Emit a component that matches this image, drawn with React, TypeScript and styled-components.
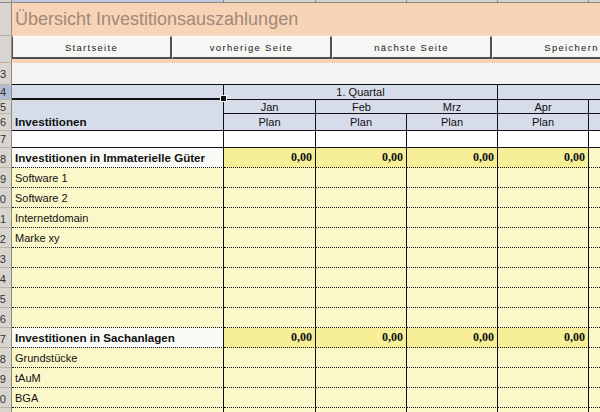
import React from "react";
import styled, { createGlobalStyle } from "styled-components";

const GlobalStyle = createGlobalStyle`
  html, body {
    margin: 0;
    padding: 0;
    background: #ffffff;
    overflow: hidden;
  }
  body {
    font-family: "Liberation Sans", Arial, sans-serif;
  }
`;

// row head, label column, Jan, Feb, Mrz, Apr, rest
const COLS = "12px 212px 92px 91px 91px 91px 1fr";

const PEACH = "#f7d4b6";
const HEAD_BLUE = "#d6dce9";
const PALE = "#faf7c9";
const SUM = "#f6ef98";

type RowDef = { n: number; label?: string; sum?: boolean };

const bodyRows: RowDef[] = [
  { n: 8, label: "Investitionen in Immaterielle Güter", sum: true },
  { n: 9, label: "Software 1" },
  { n: 10, label: "Software 2" },
  { n: 11, label: "Internetdomain" },
  { n: 12, label: "Marke xy" },
  { n: 13 },
  { n: 14 },
  { n: 15 },
  { n: 16 },
  { n: 17, label: "Investitionen in Sachanlagen", sum: true },
  { n: 18, label: "Grundstücke" },
  { n: 19, label: "tAuM" },
  { n: 20, label: "BGA" },
  { n: 21 },
];

const buttons = ["Startseite", "vorherige Seite", "nächste Seite", "Speichern"];

export default function App() {
  return (
    <>
      <GlobalStyle />
      <Sheet>
        <ColumnHeads>
          <ColHead />
          <ColHead $active />
          <ColHead />
          <ColHead />
          <ColHead />
          <ColHead />
          <ColHead $last />
        </ColumnHeads>

        <Line>
          <RowHead $h={33} />
          <TitleBar>Übersicht Investitionsauszahlungen</TitleBar>
        </Line>

        <Line>
          <RowHead $h={27} />
          <ButtonBar>
            {buttons.map((b, i) => (
              <NavButton key={b} $first={i === 0}>
                {b}
              </NavButton>
            ))}
          </ButtonBar>
        </Line>

        <Line>
          <RowHead $h={22}>3</RowHead>
          <GapRow />
        </Line>

        <HeaderGrid>
          <RowHead $selected>4</RowHead>
          <SelectedCell />
          <QuarterCell $span={3}>1. Quartal</QuarterCell>
          <QuarterCell $span={2} $open />

          <RowHead>5</RowHead>
          <GroupLabel>Investitionen</GroupLabel>
          <HeadCell>Jan</HeadCell>
          <HeadCell $open>Feb</HeadCell>
          <HeadCell>Mrz</HeadCell>
          <HeadCell>Apr</HeadCell>
          <HeadCell $open />

          <RowHead>6</RowHead>
          <HeadCell>Plan</HeadCell>
          <HeadCell>Plan</HeadCell>
          <HeadCell>Plan</HeadCell>
          <HeadCell>Plan</HeadCell>
          <HeadCell $open />

          <RowHead>7</RowHead>
          <BlankCell />
          <BlankCell />
          <BlankCell />
          <BlankCell />
          <BlankCell />
          <BlankCell $open />
        </HeaderGrid>

        <BodyGrid>
          {bodyRows.map((r) => (
            <React.Fragment key={r.n}>
              <RowHead $bottom>{r.n}</RowHead>
              <LabelCell $sum={r.sum}>{r.label}</LabelCell>
              {[0, 1, 2, 3].map((c) => (
                <ValueCell key={c} $sum={r.sum}>
                  {r.sum ? "0,00" : ""}
                </ValueCell>
              ))}
              <ValueCell $open />
            </React.Fragment>
          ))}
        </BodyGrid>
      </Sheet>
    </>
  );
}

const Sheet = styled.div`
  width: 600px;
  height: 412px;
  overflow: hidden;
  display: flex;
  flex-direction: column;
  background: #ffffff;
`;

const ColumnHeads = styled.div`
  display: grid;
  grid-template-columns: ${COLS};
  height: 3px;
  flex: 0 0 3px;
`;

const ColHead = styled.div<{ $active?: boolean; $last?: boolean }>`
  box-sizing: border-box;
  background: ${(p) => (p.$active ? "#c3c9dc" : "#d6d3cc")};
  border-right: ${(p) => (p.$last ? "none" : "1px solid #8e8b84")};
  border-bottom: 1px solid #8e8b84;
`;

const Line = styled.div`
  display: flex;
`;

const RowHead = styled.div<{ $selected?: boolean; $h?: number; $bottom?: boolean }>`
  box-sizing: border-box;
  width: 12px;
  flex: 0 0 12px;
  height: ${(p) => (p.$h ? `${p.$h}px` : "auto")};
  background: ${(p) => (p.$selected ? "#b4bcd4" : "#d8d5cf")};
  border-right: 1px solid #8e8b84;
  border-bottom: 1px solid #b8b4ac;
  overflow: hidden;
  display: flex;
  align-items: ${(p) => (p.$bottom ? "flex-end" : "center")};
  justify-content: flex-end;
  padding-right: 5px;
  padding-bottom: ${(p) => (p.$bottom ? "2px" : "0")};
  font-size: 11px;
  color: #333;
  white-space: nowrap;
`;

const TitleBar = styled.div`
  flex: 1;
  height: 33px;
  background: ${PEACH};
  padding-left: 3px;
  display: flex;
  align-items: center;
  font-size: 18px;
  color: #a08a7b;
  white-space: nowrap;
`;

const ButtonBar = styled.div`
  flex: 1;
  height: 27px;
  box-sizing: border-box;
  padding-bottom: 4px;
  background: ${PEACH};
  display: flex;
  overflow: hidden;
`;

const NavButton = styled.div<{ $first?: boolean }>`
  box-sizing: border-box;
  flex: 0 0 160px;
  height: 23px;
  background: #f6f6f5;
  border-top: 1px solid #ffffff;
  border-left: ${(p) => (p.$first ? "1px solid #505050" : "1px solid #ffffff")};
  border-right: 2px solid #505050;
  border-bottom: 2px solid #505050;
  display: flex;
  align-items: center;
  justify-content: center;
  font-size: 9.5px;
  letter-spacing: 1.3px;
  color: #1a1a1a;
  white-space: nowrap;
`;

const GapRow = styled.div`
  flex: 1;
  height: 22px;
  box-sizing: border-box;
  background: #f3f3f3;
  border-bottom: 1px solid #111;
`;

const HeaderGrid = styled.div`
  display: grid;
  grid-template-columns: ${COLS};
  grid-template-rows: 15px 14px 17px 17px;
`;

const SelectedCell = styled.div`
  position: relative;
  box-sizing: border-box;
  background: ${HEAD_BLUE};
  border-right: 1px solid #111;
  border-bottom: 2px solid #111;

  &::after {
    content: "";
    position: absolute;
    right: -4px;
    bottom: -4px;
    width: 5px;
    height: 5px;
    background: #111;
    border: 1px solid #ffffff;
    z-index: 2;
  }
`;

const QuarterCell = styled.div<{ $span: number; $open?: boolean }>`
  grid-column: span ${(p) => p.$span};
  box-sizing: border-box;
  background: ${HEAD_BLUE};
  border-right: ${(p) => (p.$open ? "none" : "1px solid #111")};
  border-bottom: 1px solid #111;
  display: flex;
  align-items: center;
  justify-content: center;
  font-size: 11px;
  color: #111;
`;

const GroupLabel = styled.div`
  grid-row: span 2;
  box-sizing: border-box;
  background: ${HEAD_BLUE};
  border-right: 1px solid #111;
  border-bottom: 1px solid #111;
  display: flex;
  align-items: flex-end;
  padding: 0 0 2px 3px;
  font-size: 11.6px;
  font-weight: bold;
  color: #111;
`;

const HeadCell = styled.div<{ $open?: boolean }>`
  box-sizing: border-box;
  background: ${HEAD_BLUE};
  border-right: ${(p) => (p.$open ? "none" : "1px solid #111")};
  border-bottom: 1px solid #111;
  display: flex;
  align-items: center;
  justify-content: center;
  font-size: 11px;
  color: #111;
`;

const BlankCell = styled.div<{ $open?: boolean }>`
  box-sizing: border-box;
  background: #ffffff;
  border-right: ${(p) => (p.$open ? "none" : "1px solid #111")};
  border-bottom: 1px solid #111;
`;

const BodyGrid = styled.div`
  display: grid;
  grid-template-columns: ${COLS};
  grid-auto-rows: 20px;
`;

const LabelCell = styled.div<{ $sum?: boolean }>`
  box-sizing: border-box;
  background: ${(p) => (p.$sum ? "#fafaf6" : PALE)};
  border-right: 1px solid #111;
  border-bottom: 1px dotted #111;
  display: flex;
  align-items: center;
  padding-left: 3px;
  font-size: ${(p) => (p.$sum ? "11.6px" : "11px")};
  font-weight: ${(p) => (p.$sum ? "bold" : "normal")};
  color: #111;
  white-space: nowrap;
  overflow: hidden;
`;

const ValueCell = styled.div<{ $sum?: boolean; $open?: boolean }>`
  box-sizing: border-box;
  background: ${(p) => (p.$sum ? SUM : PALE)};
  border-right: ${(p) => (p.$open ? "none" : "1px solid #111")};
  border-bottom: 1px dotted #111;
  display: flex;
  align-items: center;
  justify-content: flex-end;
  padding-right: 3px;
  font-family: "Liberation Serif", "Times New Roman", serif;
  font-size: 12px;
  font-weight: bold;
  color: #111;
`;
